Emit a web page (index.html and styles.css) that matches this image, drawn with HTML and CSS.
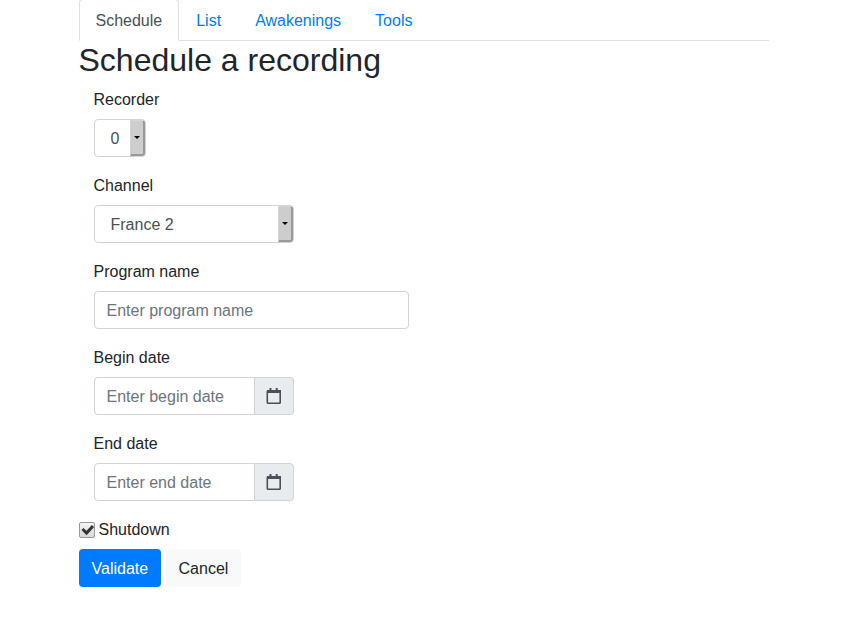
FILE: index.html
```
<!DOCTYPE html>
<html lang="en">
<head>
<meta charset="utf-8">
<title>Schedule a recording</title>
<link rel="stylesheet" href="styles.css">
</head>
<body>
<main class="container">
  <nav class="tabs">
    <a class="tab active">Schedule</a>
    <a class="tab">List</a>
    <a class="tab">Awakenings</a>
    <a class="tab">Tools</a>
  </nav>
  <h1>Schedule a recording</h1>
  <form>
    <div class="group">
      <label>Recorder</label>
      <div class="select small"><span>0</span><i class="arrow"></i></div>
    </div>
    <div class="group">
      <label>Channel</label>
      <div class="select medium"><span>France 2</span><i class="arrow"></i></div>
    </div>
    <div class="group">
      <label for="name">Program name</label>
      <input class="control" id="name" placeholder="Enter program name">
    </div>
    <div class="group">
      <label for="begin">Begin date</label>
      <div class="date">
        <input class="control" id="begin" placeholder="Enter begin date">
        <span class="addon"><svg width="16" height="18" viewBox="0 0 16 18"><rect class="frame" x="1.3" y="3.8" width="12.9" height="12.4" rx=".8"/><path class="bar" d="M1 3h14v3H1zM3.5 1h2v2.500h-2zM9.700 1h2v2.500h-2z"/></svg></span>
      </div>
    </div>
    <div class="group">
      <label for="end">End date</label>
      <div class="date">
        <input class="control" id="end" placeholder="Enter end date">
        <span class="addon"><svg width="16" height="18" viewBox="0 0 16 18"><rect class="frame" x="1.3" y="3.8" width="12.9" height="12.4" rx=".8"/><path class="bar" d="M1 3h14v3H1zM3.5 1h2v2.500h-2zM9.700 1h2v2.500h-2z"/></svg></span>
      </div>
    </div>
    <div class="check">
      <span class="box"><svg width="14" height="14" viewBox="0 0 14 14"><path d="M2.500 6l4 4L13 3"/></svg></span>
      <span>Shutdown</span>
    </div>
    <div class="buttons">
      <button type="button" class="btn primary">Validate</button>
      <button type="button" class="btn light">Cancel</button>
    </div>
  </form>
</main>
</body>
</html>
```
FILE: styles.css
```
* { box-sizing: border-box; }
body { margin: 0; background: #fff; color: #212529; font: 16px/24px "Liberation Sans", sans-serif; }
.container { width: 690px; margin-left: 78.5px; }
.tabs { display: flex; height: 41px; border-bottom: 1px solid #dee2e6; }
.tab { height: 42px; margin-top: -1px; padding: 9px 16px 7px; border: 1px solid transparent; border-radius: 4px 4px 0 0; color: #007bff; }
.tab.active { color: #495057; background: #fff; border-color: #dee2e6 #dee2e6 #fff; }
h1 { margin: 0 0 8px; font-size: 32px; line-height: 38px; font-weight: 500; }
.group { margin: 0 0 16px 15px; }
label { display: block; padding-top: 1px; margin-bottom: 7px; }
.select { display: flex; height: 38px; border: 1px solid #ced4da; border-radius: 4px; color: #495057; padding: 7px 0 5px 16px; position: relative; }
.small { width: 52px; }
.medium { width: 200px; }
.arrow { position: absolute; top: 0; right: 0; width: 15px; height: 36px; background: #cdcdcd; border: 1px solid #d5d5d5; border-right: 2px solid #999; border-bottom: 2px solid #999; border-radius: 0 3px 3px 0; }
.arrow::after { content: ""; position: absolute; left: 3px; top: 15px; border: 3.5px solid transparent; border-top-color: #000; border-bottom: 0; }
.control { display: block; width: 315px; height: 38px; padding: 7px 12px 5px; border: 1px solid #ced4da; border-radius: 4px; font: inherit; color: #495057; background: #fff; }
.control::placeholder { color: #6c757d; opacity: 1; }
.date { display: flex; width: 200px; }
.date .control { width: 161px; border-radius: 4px 0 0 4px; }
.addon { display: flex; align-items: center; justify-content: center; width: 40px; margin-left: -1px; background: #e9ecef; border: 1px solid #ced4da; border-radius: 0 4px 4px 0; }
.frame { fill: none; stroke: #495057; stroke-width: 1.6; }
.bar { fill: #495057; }
.check { display: flex; align-items: center; gap: 4px; height: 24px; margin: 17px 0 7px; }
.box { display: flex; width: 16px; height: 16px; border: 1px solid #999; border-radius: 2px; background: linear-gradient(#f4f4f4, #d8d8d8); }
.box path { fill: none; stroke: #333; stroke-width: 3; }
.buttons { display: flex; gap: 4.4px; }
.btn { height: 38px; padding: 7px 12px 5px; border: 1px solid transparent; border-radius: 4px; font: inherit; }
.primary { background: #007bff; color: #fff; }
.light { background: #f8f9fa; color: #212529; }
```
